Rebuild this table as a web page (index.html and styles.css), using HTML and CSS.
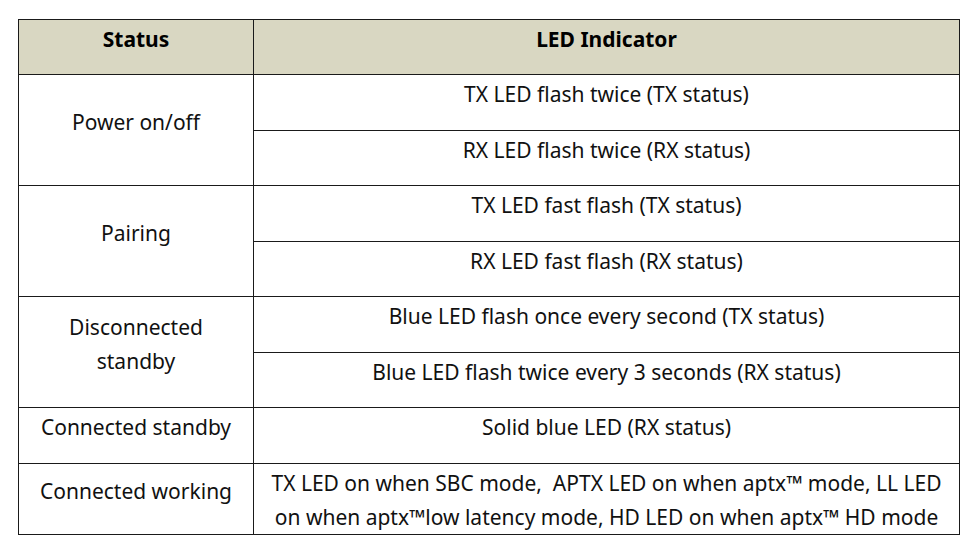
FILE: index.html
```html
<!DOCTYPE html>
<html>
<head>
<meta charset="utf-8">
<link rel="stylesheet" href="styles.css">
</head>
<body>
<table class="led-table">
  <thead>
    <tr>
      <th class="col-status">Status</th>
      <th class="col-led">LED Indicator</th>
    </tr>
  </thead>
  <tbody>
    <tr>
      <td class="status" rowspan="2">Power on/off</td>
      <td class="led">TX LED flash twice (TX status)</td>
    </tr>
    <tr>
      <td class="led">RX LED flash twice (RX status)</td>
    </tr>
    <tr>
      <td class="status" rowspan="2">Pairing</td>
      <td class="led">TX LED fast flash (TX status)</td>
    </tr>
    <tr>
      <td class="led">RX LED fast flash (RX status)</td>
    </tr>
    <tr>
      <td class="status" rowspan="2">Disconnected<br>standby</td>
      <td class="led">Blue LED flash once every second (TX status)</td>
    </tr>
    <tr>
      <td class="led">Blue LED flash twice every 3 seconds (RX status)</td>
    </tr>
    <tr>
      <td class="status">Connected standby</td>
      <td class="led">Solid blue LED (RX status)</td>
    </tr>
    <tr>
      <td class="status">Connected working</td>
      <td class="led">TX LED on when SBC mode,&nbsp; APTX LED on when aptx™ mode, LL LED on when aptx™low latency mode, HD LED on when aptx™ HD mode</td>
    </tr>
  </tbody>
</table>
</body>
</html>
```

FILE: styles.css
```css
html, body {
  margin: 0;
  background: #ffffff;
}

body {
  padding: 19px 0 0 18px;
  font-family: "Noto Sans", "Open Sans", sans-serif;
  font-size: 21px;
  color: #111111;
}

.led-table {
  border-collapse: collapse;
  width: 942px;
  table-layout: fixed;
}

.led-table th,
.led-table td {
  border: 1px solid #1a1a1a;
  text-align: center;
  line-height: 34px;
  padding: 2px 3px 0;
}

.led-table tr {
  height: 55.5px;
}

.led-table thead tr {
  height: 55px;
}

.led-table th {
  background: #d9d7c2;
  font-weight: bold;
  vertical-align: top;
  color: #000000;
}

.col-status {
  width: 228px;
}

.led-table td.status {
  vertical-align: middle;
  padding-bottom: 18px;
}

.led-table td.led {
  vertical-align: top;
}
```
